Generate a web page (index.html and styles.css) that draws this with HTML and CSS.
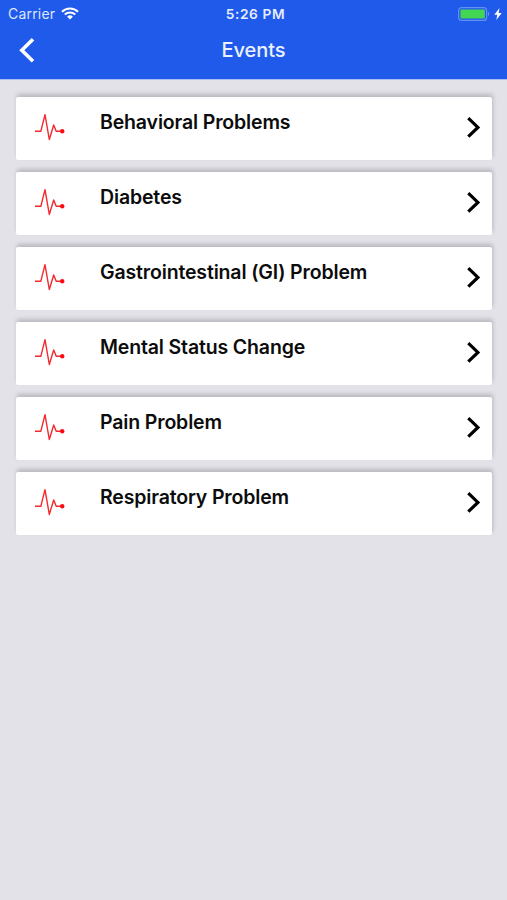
FILE: index.html
```html
<!DOCTYPE html>
<html lang="en">
<head>
  <meta charset="UTF-8" />
  <meta name="viewport" content="width=device-width, initial-scale=1.0" />
  <title>Events</title>
  <link rel="stylesheet" href="styles.css">
</head>
<body>
  <!-- Shared icons -->
  <svg class="icon-defs" width="0" height="0">
    <symbol id="pulse" viewBox="0 0 32 30">
      <path d="M1 18.3h5.8L11 1.6l4.3 24.9 4.4-14.5 2.5 6.3h5" fill="none" stroke="#f2292d" stroke-width="1.4" stroke-linejoin="round" />
      <circle cx="28.2" cy="18.3" r="2.2" fill="#fa0a12" />
    </symbol>
    <symbol id="chevron" viewBox="0 0 16 24">
      <path d="M2.3 2.1l9.6 9.3-9.6 9.3" fill="none" stroke="currentColor" stroke-width="3.2" />
    </symbol>
  </svg>

  <header class="header">
    <div class="status-bar">
      <div class="carrier">
        <span>Carrier</span>
        <svg class="wifi" viewBox="0 0 18 13">
          <path d="M1 4.8a11.4 11.4 0 0 1 16 0M3.8 7.6a7.4 7.4 0 0 1 10.4 0" fill="none" stroke="#fff" stroke-width="2.1" />
          <path d="M6.1 9.7a4.2 4.2 0 0 1 5.8 0L9 12.6z" fill="#fff" />
        </svg>
      </div>
      <div class="time">5:26 PM</div>
      <div class="power">
        <svg class="battery" viewBox="0 0 32 14">
          <rect x=".6" y=".6" width="28" height="12.8" rx="3" fill="none" stroke="#6490f3" stroke-width="1.2" />
          <rect x="2.4" y="2.4" width="24.4" height="9.2" rx="1" fill="#42d653" />
          <path d="M30 4.8c1.6.5 1.6 3.9 0 4.4z" fill="#6490f3" />
        </svg>
        <svg class="bolt" viewBox="0 0 8 12">
          <path d="M5.5 0L.3 6.7h3L2.3 12l5.4-7H4.6z" fill="#fff" />
        </svg>
      </div>
    </div>
    <div class="title-bar">
      <svg class="back" viewBox="0 0 18 26">
        <path d="M15 2.2L3.8 13.2 15 24.2" fill="none" stroke="#fff" stroke-width="3.6" />
      </svg>
      <h1>Events</h1>
    </div>
  </header>

  <main class="event-list">
    <div class="event">
      <svg class="pulse"><use href="#pulse" /></svg>
      <h2>Behavioral Problems</h2>
      <svg class="chevron"><use href="#chevron" /></svg>
    </div>
    <div class="event">
      <svg class="pulse"><use href="#pulse" /></svg>
      <h2>Diabetes</h2>
      <svg class="chevron"><use href="#chevron" /></svg>
    </div>
    <div class="event">
      <svg class="pulse"><use href="#pulse" /></svg>
      <h2>Gastrointestinal (GI) Problem</h2>
      <svg class="chevron"><use href="#chevron" /></svg>
    </div>
    <div class="event">
      <svg class="pulse"><use href="#pulse" /></svg>
      <h2>Mental Status Change</h2>
      <svg class="chevron"><use href="#chevron" /></svg>
    </div>
    <div class="event">
      <svg class="pulse"><use href="#pulse" /></svg>
      <h2>Pain Problem</h2>
      <svg class="chevron"><use href="#chevron" /></svg>
    </div>
    <div class="event">
      <svg class="pulse"><use href="#pulse" /></svg>
      <h2>Respiratory Problem</h2>
      <svg class="chevron"><use href="#chevron" /></svg>
    </div>
  </main>
</body>
</html>
```
FILE: styles.css
```css
* {
  box-sizing: border-box;
}

body {
  margin: 0;
  min-height: 100vh;
  background-color: #e3e2e9;
  font-family: Inter, 'Liberation Sans', sans-serif;
}

.icon-defs {
  display: block;
}

.header {
  height: 80px;
  background-color: #205aeb;
  border-bottom: 1px solid #a9bdf0;
  color: white;
}

.status-bar {
  display: grid;
  grid-template-columns: 1fr auto 1fr;
  align-items: center;
  height: 27px;
  padding: 0 5px 0 8px;
  font-size: 14px;
}

.carrier {
  display: flex;
  align-items: center;
  gap: 6px;
  letter-spacing: 0.2px;
  color: #dce7ff;
}

.wifi {
  width: 18px;
  height: 13px;
}

.time {
  margin-left: 1px;
  font-size: 13.7px;
  font-weight: 600;
  letter-spacing: 0.6px;
  color: #e6edff;
}

.power {
  display: flex;
  justify-content: flex-end;
  align-items: center;
  gap: 4px;
}

.battery {
  width: 32px;
  height: 14px;
}

.bolt {
  width: 8px;
  height: 12px;
}

.title-bar {
  display: grid;
  grid-template-columns: 1fr auto 1fr;
  align-items: center;
  height: 46px;
  padding: 0 18px;
}

.back {
  width: 18px;
  height: 26px;
}

h1 {
  margin: 0;
  font-size: 20px;
  font-weight: 500;
  letter-spacing: -0.1px;
  color: #eaf0ff;
}

.event-list {
  display: flex;
  flex-direction: column;
  gap: 12px;
  padding: 17px 15px 0 16px;
}

.event {
  display: flex;
  align-items: center;
  height: 63px;
  padding: 0 10px 1px 18px;
  background-color: white;
  border-radius: 2px;
  box-shadow: 1px -3px 4px rgba(0, 0, 0, 0.18);
}

.pulse {
  width: 32px;
  height: 30px;
}

.event h2 {
  flex: 1;
  align-self: flex-start;
  margin: 13px 0 0 34px;
  font-size: 19.5px;
  line-height: 24px;
  font-weight: 600;
  letter-spacing: -0.15px;
  color: #0c0c0c;
}

.chevron {
  width: 16px;
  height: 24px;
}
```
